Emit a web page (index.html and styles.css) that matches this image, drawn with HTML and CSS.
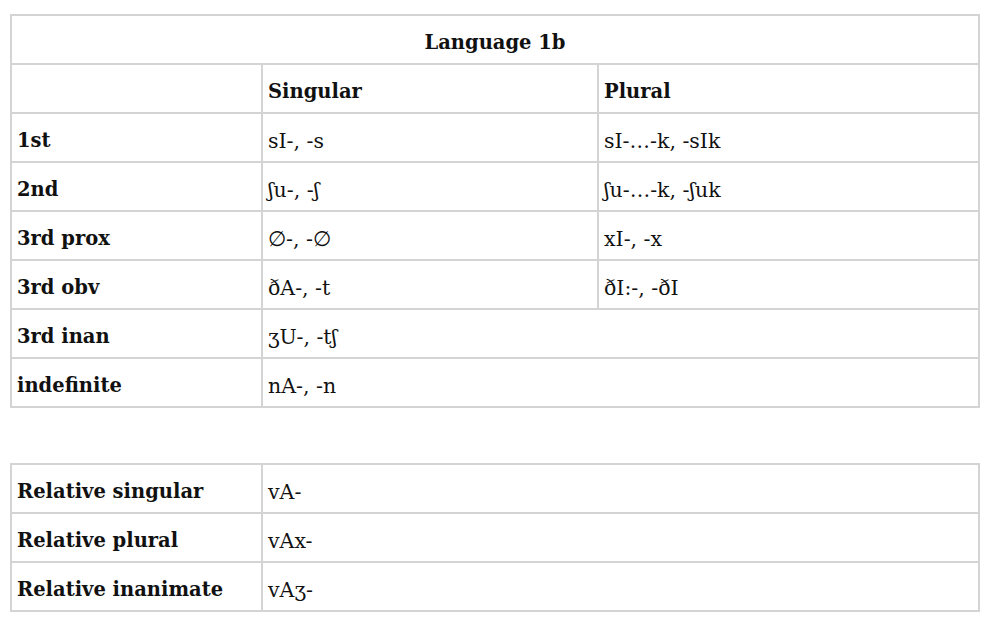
FILE: index.html
```html
<!DOCTYPE html>
<html>
<head>
<meta charset="utf-8">
<link rel="stylesheet" href="styles.css">
</head>
<body>
<table class="grid">
  <colgroup><col class="c1"><col class="c2"><col class="c3"></colgroup>
  <tr><th colspan="3" class="title">Language 1b</th></tr>
  <tr><th></th><th>Singular</th><th>Plural</th></tr>
  <tr><th>1st</th><td>sI-, -s</td><td>sI-…-k, -sIk</td></tr>
  <tr><th>2nd</th><td>ʃu-, -ʃ</td><td>ʃu-…-k, -ʃuk</td></tr>
  <tr><th>3rd prox</th><td>∅-, -∅</td><td>xI-, -x</td></tr>
  <tr><th>3rd obv</th><td>ðA-, -t</td><td>ðI:-, -ðI</td></tr>
  <tr><th>3rd inan</th><td colspan="2">ʒU-, -tʃ</td></tr>
  <tr><th>indefinite</th><td colspan="2">nA-, -n</td></tr>
</table>
<table class="grid second">
  <colgroup><col class="c1"><col class="c23"></colgroup>
  <tr><th>Relative singular</th><td>vA-</td></tr>
  <tr><th>Relative plural</th><td>vAx-</td></tr>
  <tr><th>Relative inanimate</th><td>vAʒ-</td></tr>
</table>
</body>
</html>
```
FILE: styles.css
```css
html, body { margin: 0; background: #fff; }
body {
  padding: 14px 0 0 10px;
  font-family: "DejaVu Serif", "Liberation Serif", serif;
  font-size: 19.5px;
  color: #111;
}
.grid {
  border-collapse: collapse;
  table-layout: fixed;
  width: 968px;
}
.grid.second { margin-top: 55px; }
.c1 { width: 251px; }
.c2 { width: 336px; }
.c3 { width: 381px; }
.c23 { width: 717px; }
.grid th, .grid td {
  border: 2px solid #d4d4d4;
  height: 49px;
  padding: 6px 5px 0;
  text-align: left;
  vertical-align: middle;
  box-sizing: border-box;
}
.grid th { font-weight: bold; font-size: 19.5px; }
.grid td { font-weight: normal; font-size: 20.5px; }
.grid th.title { text-align: center; }
```
